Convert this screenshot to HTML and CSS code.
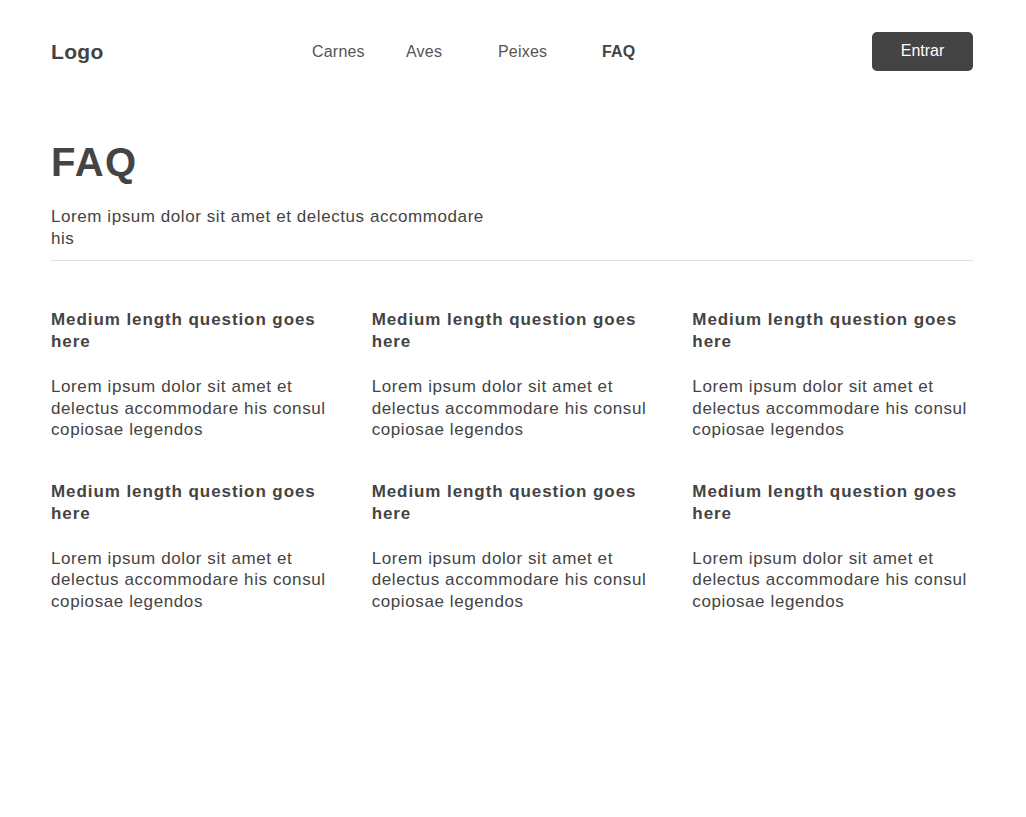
FILE: index.html
```html
<!DOCTYPE html>
<html lang="pt">
<head>
<meta charset="utf-8">
<title>FAQ</title>
<link rel="stylesheet" href="styles.css">
</head>
<body>
<div class="page">
  <header class="header">
    <div class="logo">Logo</div>
    <nav class="nav">
      <a class="nav-link">Carnes</a>
      <a class="nav-link">Aves</a>
      <a class="nav-link">Peixes</a>
      <a class="nav-link active">FAQ</a>
    </nav>
    <button class="btn">Entrar</button>
  </header>
  <section class="intro">
    <h1 class="title">FAQ</h1>
    <p class="lead">Lorem ipsum dolor sit amet et delectus accommodare his</p>
  </section>
  <section class="grid">
    <div class="item"><h3 class="q">Medium length question goes here</h3><p class="a">Lorem ipsum dolor sit amet et delectus accommodare his consul copiosae legendos</p></div>
    <div class="item"><h3 class="q">Medium length question goes here</h3><p class="a">Lorem ipsum dolor sit amet et delectus accommodare his consul copiosae legendos</p></div>
    <div class="item"><h3 class="q">Medium length question goes here</h3><p class="a">Lorem ipsum dolor sit amet et delectus accommodare his consul copiosae legendos</p></div>
    <div class="item"><h3 class="q">Medium length question goes here</h3><p class="a">Lorem ipsum dolor sit amet et delectus accommodare his consul copiosae legendos</p></div>
    <div class="item"><h3 class="q">Medium length question goes here</h3><p class="a">Lorem ipsum dolor sit amet et delectus accommodare his consul copiosae legendos</p></div>
    <div class="item"><h3 class="q">Medium length question goes here</h3><p class="a">Lorem ipsum dolor sit amet et delectus accommodare his consul copiosae legendos</p></div>
  </section>
</div>
</body>
</html>
```
FILE: styles.css
```css
* { box-sizing: border-box; }
body {
  margin: 0;
  background: #fff;
  color: #444;
  font-family: "Liberation Sans", Arial, sans-serif;
}
.page {
  width: 922px;
  margin-left: 51px;
}
.header {
  height: 102px;
  display: flex;
  align-items: center;
  padding-top: 1px;
}
.logo {
  font-size: 21px;
  font-weight: bold;
  width: 261px;
  letter-spacing: 0.3px;
}
.nav {
  display: grid;
  grid-template-columns: 94px 92px 104px auto;
  flex: 1;
}
.nav-link {
  font-size: 16px;
  color: #555;
  letter-spacing: 0.2px;
}
.nav-link.active {
  font-weight: bold;
  color: #444;
}
.btn {
  width: 101px;
  height: 39px;
  margin-top: -1px;
  border: none;
  border-radius: 5px;
  background: #444;
  color: #fff;
  font-family: inherit;
  font-size: 16px;
}
.intro {
  padding-top: 36px;
  padding-bottom: 10px;
  border-bottom: 1px solid #e0e0e0;
}
.title {
  margin: 0;
  font-size: 40px;
  line-height: 48px;
  letter-spacing: 1.5px;
}
.lead {
  margin: 20px 0 0;
  max-width: 450px;
  font-size: 17px;
  line-height: 22px;
  letter-spacing: 0.57px;
}
.grid {
  display: grid;
  grid-template-columns: repeat(3, 1fr);
  column-gap: 40px;
  row-gap: 40px;
  padding-top: 48px;
}
.q {
  margin: 0;
  font-size: 17px;
  line-height: 22px;
  letter-spacing: 0.92px;
}
.a {
  margin: 23px 0 0;
  font-size: 17px;
  line-height: 21.6px;
  letter-spacing: 0.6px;
}
```
